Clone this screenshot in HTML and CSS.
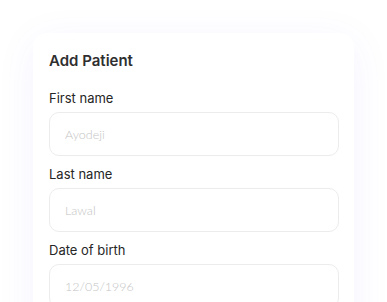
FILE: index.html
```html
<!DOCTYPE html>
<html lang="en">
<head>
<meta charset="utf-8">
<title>Add Patient</title>
<link rel="stylesheet" href="styles.css">
</head>
<body>
<main class="stage">
  <section class="card">
    <h1 class="title">Add Patient</h1>
    <div class="fields">
      <label class="field">
        <span class="label">First name</span>
        <input class="input" type="text" placeholder="Ayodeji">
      </label>
      <label class="field">
        <span class="label">Last name</span>
        <input class="input" type="text" placeholder="Lawal">
      </label>
      <label class="field">
        <span class="label">Date of birth</span>
        <input class="input" type="text" placeholder="12/05/1996">
      </label>
    </div>
  </section>
</main>
</body>
</html>
```
FILE: styles.css
```css
html, body {
  margin: 0;
  padding: 0;
  background: #ffffff;
  font-family: Inter, "Noto Sans", sans-serif;
  overflow: hidden;
}
.stage {
  padding: 33px 0 0 33px;
  height: 302px;
  box-sizing: border-box;
}
.card {
  width: 321px;
  min-height: 340px;
  box-sizing: border-box;
  background: #ffffff;
  border-radius: 13px;
  padding: 16px 16px 16px 16px;
  box-shadow: 0 8px 40px rgba(110, 90, 240, 0.07);
  display: flex;
  flex-direction: column;
}
.title {
  margin: 0;
  font-size: 15px;
  line-height: 23px;
  font-weight: 600;
  color: #2f2f2f;
}
.fields {
  margin-top: 16px;
  display: flex;
  flex-direction: column;
  gap: 8px;
}
.field {
  display: flex;
  flex-direction: column;
  gap: 4px;
}
.label {
  font-size: 13px;
  line-height: 20px;
  font-weight: 400;
  color: #262626;
}
.input {
  height: 44px;
  box-sizing: border-box;
  width: 290px;
  border: 1px solid #ececec;
  border-radius: 10px;
  padding: 0 15px;
  font-family: Lato, Inter, sans-serif;
  font-weight: 300;
  font-size: 12.5px;
  color: #333;
  background: #fff;
  outline: none;
}
.input::placeholder {
  color: #c4c4c4;
}
```
